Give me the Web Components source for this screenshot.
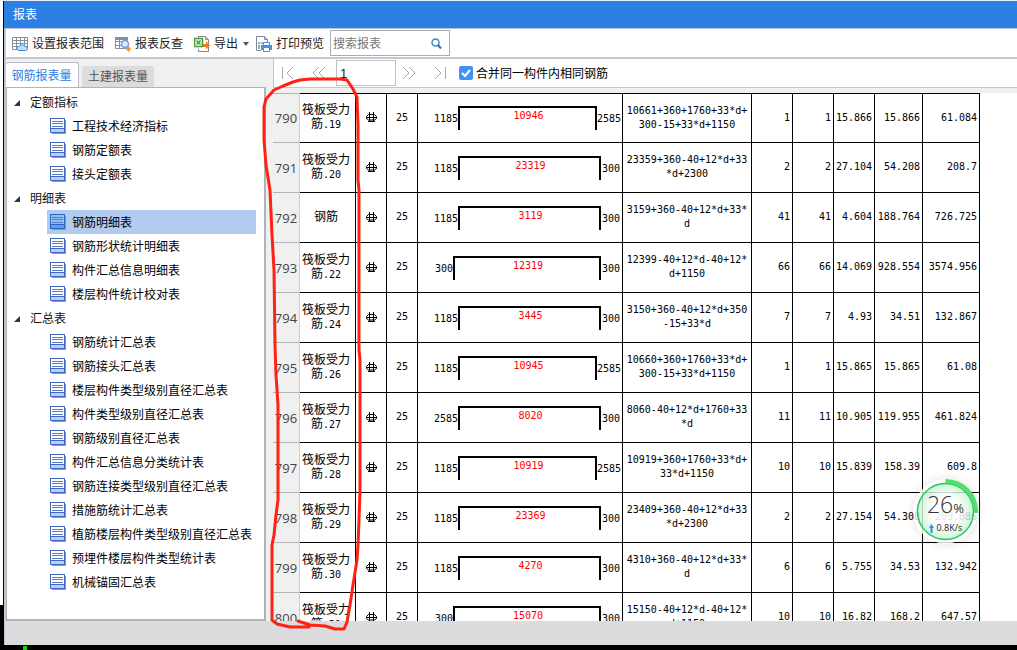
<!DOCTYPE html>
<html lang="zh-CN">
<head>
<meta charset="utf-8">
<title>报表</title>
<style>
  html, body { height: 100%; }
  body { margin: 0; overflow: hidden; background: #000; font: 12px/16px "Liberation Sans", "Noto Sans CJK SC", sans-serif; color: #111; }
</style>
</head>
<body>
<report-window heading="报表">
  <report-toolbar slot="toolbar"></report-toolbar>
  <report-sidebar slot="side"></report-sidebar>
  <report-pager slot="pager"></report-pager>
  <rebar-table slot="table"></rebar-table>
  <red-markup slot="overlay"></red-markup>
  <speed-ball slot="overlay" percent="26" rate="0.8K/s"></speed-ball>
</report-window>

<script>
const define = (name, html) => customElements.define(name, class extends HTMLElement {
  connectedCallback() {
    if (this.shadowRoot) return;
    const t = document.createElement('template');
    t.innerHTML = '<style>*{box-sizing:border-box}button,input{font:inherit;color:inherit;margin:0}button{border:0;background:none;padding:0}svg{display:block;flex:none}</style>' + (typeof html === 'function' ? html(this) : html);
    this.attachShadow({ mode: 'open' }).append(t.content.cloneNode(true));
  }
});

define('report-window', el => `
<style>
  :host { display: flex; flex-direction: column; position: relative; height: 100vh; box-sizing: border-box; padding: 1px 0 5px 4px;
    background: linear-gradient(#e8edf3, #e8edf3) 0 0 / 100% 1px no-repeat,
      linear-gradient(#00e000, #00e000) 23px 100% / 4px 4px no-repeat,
      linear-gradient(#fff, #fff) 0 0 / 3px 605px no-repeat, #000; }
  header { flex: none; height: 28px; padding: 0 9px; background: #2d80e3; border-bottom: 1px solid #b9c3cf; color: #fff; line-height: 28px; }
  h1 { margin: 0; font: inherit; }
  main { flex: 1; min-height: 0; display: flex; gap: 7px; background: #f0f0f0; border-left: 2px solid #c3c6cd; }
  section { flex: 1; min-width: 0; display: flex; flex-direction: column; }
  .sheet { flex: 1; min-height: 0; margin-top: 5px; overflow: hidden; background: #fff; }
  footer { flex: none; height: 24px; background: #dcdcdf; border-left: 1px solid #c3c6cd; }
</style>
<header><h1>${el.getAttribute('heading')}</h1></header>
<slot name="toolbar"></slot>
<main>
  <slot name="side"></slot>
  <section><slot name="pager"></slot><div class="sheet"><slot name="table"></slot></div></section>
</main>
<footer></footer>
<slot name="overlay"></slot>`);

const grid = `<path d="M.5 1.5h15v12h-15zM.5 4.500h15M.5 7.500h15M.5 10.500h15M4.500 1.500v12M8.500 1.500v12M12.500 1.500v12" fill="#fff" stroke="#84929f"/>`;
define('report-toolbar', `
<style>
  :host { display: flex; align-items: center; height: 30px; flex: none; box-sizing: border-box; background: #fff; border-bottom: 2px solid #c5c7cc; border-left: 2px solid #c3c6cd; padding-left: 6px; gap: 11px; color: #222; }
  button { display: flex; align-items: center; gap: 4px; height: 24px; padding-top: 2px; }
  .caret { border: 3px solid transparent; border-top: 4px solid #555; border-bottom: 0; margin-left: 1px; }
  .tight { margin-left: -4px; }
  label { display: flex; align-items: center; height: 26px; width: 120px; border: 1px solid #a9adb5; padding: 0 7px 0 2px; margin-left: -5px; background: #fff; }
  input { border: 0; outline: 0; width: 0; flex: 1; padding: 2px 0 0; background: none; }
  input::placeholder { color: #777; opacity: 1; }
</style>
<button><svg width="16" height="16">${grid}<path d="M6.500 14.500c-3-1-2-4.500.5-4 1-2 5.500-2 6 0 3.500 0 3.500 3.500.5 4z" fill="#bfe0fa" stroke="#3f87cc"/></svg>设置报表范围</button>
<button><svg width="16" height="16"><path d="M.5 1.500h12v11H.5zM.5 5.500h12M.5 9.500h8M4.500 1.500v11" fill="#fff" stroke="#84929f"/><path d="M0 1h13v3H0z" fill="#84929f"/><circle cx="10" cy="8" r="3.500" fill="#d6ebfb" stroke="#6f9fe8" stroke-width="1.500"/><path d="M13.500 10l2.500 3-2.500 3-2.500-3z" fill="#f79a1c"/></svg>报表反查</button>
<button><svg width="16" height="16"><path d="M4.500 2V.5h7l3 3v12h-10V13M11.500.5v3h3" fill="#fff" stroke="#7c8b99"/><path d="M.5 2.500h8v8h-8z" fill="#eef7ea" stroke="#4d9a3c" stroke-width="1.500"/><path d="M2.500 4.500l4 4M6.500 4.500l-4 4" stroke="#4d9a3c" stroke-width="1.500"/><path d="M9 8h3V5l4 4.500-4 4V11H9z" fill="#f47b20"/></svg>导出<span class="caret"></span></button>
<button class="tight"><svg width="16" height="16"><path d="M5 14.500H.5V.5h8l3 3V6M8.500.5v3h3" fill="#fff" stroke="#7c8b99"/><path d="M2 7h2M2 10h2M5 7h2M2 12h2" stroke="#7c8b99" stroke-width="1.500"/><path d="M7.500 6.500h6v3h-6z" fill="#fff" stroke="#4a90e2"/><path d="M5 9h11v5H5z" fill="#4a90e2"/><path d="M7.500 11.500h6v4h-6z" fill="#fff" stroke="#4a90e2"/></svg>打印预览</button>
<label><input type="search" placeholder="搜索报表" aria-label="搜索报表"><svg width="11" height="11"><circle cx="4.500" cy="4.500" r="3.500" fill="none" stroke="#2f8fd0" stroke-width="1.500"/><path d="M7 7l3 3.500" stroke="#2f6fb5" stroke-width="2"/></svg></label>`);

const groups = [
  ['定额指标', '工程技术经济指标 钢筋定额表 接头定额表'],
  ['明细表', '钢筋明细表 钢筋形状统计明细表 构件汇总信息明细表 楼层构件统计校对表'],
  ['汇总表', '钢筋统计汇总表 钢筋接头汇总表 楼层构件类型级别直径汇总表 构件类型级别直径汇总表 钢筋级别直径汇总表 构件汇总信息分类统计表 钢筋连接类型级别直径汇总表 措施筋统计汇总表 植筋楼层构件类型级别直径汇总表 预埋件楼层构件类型统计表 机械锚固汇总表']
];
define('report-sidebar', `
<style>
  :host { display: flex; flex-direction: column; width: 260px; flex: none; padding-top: 3px; box-sizing: border-box; }
  nav { display: flex; align-items: flex-end; gap: 3px; height: 25px; flex: none; }
  nav button { width: 72px; height: 21px; padding: 0; background: #dcdcdc; color: #555; border-radius: 3px 3px 0 0; }
  nav button.on { width: 73px; height: 25px; padding: 2px 1px 0 0; background: #fff; color: #2d80e3; border: 1px solid #b9bcc3; border-width: 1px 1px 0 0; }
  .tree { flex: 1; min-height: 0; overflow: hidden; background: #fff; border: 1px solid #b0b3ba; border-width: 1px 2px 2px 1px; padding-top: 2px; }
</style>
<nav><button class="on">钢筋报表量</button><button>土建报表量</button></nav>
<div class="tree">${groups.map(([g, items]) => `<tree-group label="${g}">${items.split(' ').map(i => `<tree-item${i === '钢筋明细表' ? ' selected' : ''}>${i}</tree-item>`).join('')}</tree-group>`).join('')}</div>`);

define('tree-group', el => `
<style>
  :host { display: block; }
  button { display: flex; align-items: center; gap: 10px; height: 24px; padding: 2px 0 0 7px; color: #111; }
</style>
<button aria-expanded="true"><svg width="6" height="6"><path d="M6 0v6H0z" fill="#333"/></svg>${el.getAttribute('label')}</button><slot></slot>`);

define('tree-item', `
<style>
  :host { display: block; margin: 0 8px 0 40px; }
  :host([selected]) { background: #b1ccee; }
  button { display: flex; align-items: center; gap: 6px; height: 24px; width: 100%; padding: 0 0 0 3px; text-align: left; white-space: nowrap; color: #000; }
  span { padding-top: 2px; }
  rect { fill: #fff; stroke: #4169c1; }
  .foot { fill: #b9cdfb; }
  :host([selected]) rect { fill: #8dc0f4; stroke: #2b66c4; }
  :host([selected]) .foot { fill: #5f9fe8; }
</style>
<button><svg width="16" height="16"><path d="M2 15.500h13.500V2" fill="none" stroke="#8f96a8"/><rect x=".5" y=".5" width="14" height="14"/><rect class="foot" x=".5" y="10.500" width="14" height="4"/><path d="M2 3.500h11M2 5.500h11M2 8.500h11" stroke="#5b7dc8"/></svg><span><slot></slot></span></button>`);

define('report-pager', `
<style>
  :host { display: flex; align-items: center; flex: none; height: 29px; box-sizing: border-box; background: #fff; border-bottom: 1px solid #c5c7cc; border-left: 1px solid #c5c7cc; color: #000; }
  button { width: 28px; height: 24px; display: grid; place-items: center; }
  .group { display: flex; align-items: center; gap: 3px; }
  svg { fill: none; stroke: #aaa; }
  .page { width: 60px; height: 26px; border: 1px solid #bfc2c8; border-radius: 0; padding: 1px 3px 0; margin: 0 -4px 0 0; font-size: 13px; color: #222; background: #fff; outline: 0; }
  label { display: flex; align-items: center; gap: 3px; margin-left: 5px; }
  label span { padding-top: 1px; }
  .check { appearance: none; width: 14px; height: 14px; border-radius: 2px; background: #3f93f5 url("data:image/svg+xml,%3Csvg xmlns='http://www.w3.org/2000/svg' viewBox='0 0 14 14'%3E%3Cpath d='M3 7l3 3 5-6' fill='none' stroke='white' stroke-width='2'/%3E%3C/svg%3E"); }
</style>
<div class="group">
<button aria-label="首页"><svg width="14" height="14"><path d="M1.500 1v12M12 1L6 7l6 6"/></svg></button>
<button aria-label="上一页"><svg width="14" height="14"><path d="M7 1L1 7l6 6M13 1L7 7l6 6"/></svg></button>
<input class="page" value="1" aria-label="页码">
<button aria-label="下一页"><svg width="14" height="14"><path d="M1 1l6 6-6 6M7 1l6 6-6 6"/></svg></button>
<button aria-label="末页"><svg width="14" height="14"><path d="M2 1l6 6-6 6M12.500 1v12"/></svg></button>
</div>
<label><input class="check" type="checkbox" checked><span>合并同一构件内相同钢筋</span></label>`);

const rows = [
  [790, '筋.19', 1185, 10946, 2585, '10661+360+1760+33*d+|300-15+33*d+1150', 1, '15.866', '15.866', '61.084'],
  [791, '筋.20', 1185, 23319, 300, '23359+360-40+12*d+33|*d+2300', 2, '27.104', '54.208', '208.7'],
  [792, '', 1185, 3119, 300, '3159+360-40+12*d+33*|d', 41, '4.604', '188.764', '726.725'],
  [793, '筋.22', 300, 12319, 300, '12399-40+12*d-40+12*|d+1150', 66, '14.069', '928.554', '3574.956'],
  [794, '筋.24', 1185, 3445, 300, '3150+360-40+12*d+350|-15+33*d', 7, '4.93', '34.51', '132.867'],
  [795, '筋.26', 1185, 10945, 2585, '10660+360+1760+33*d+|300-15+33*d+1150', 1, '15.865', '15.865', '61.08'],
  [796, '筋.27', 2585, 8020, 300, '8060-40+12*d+1760+33|*d', 11, '10.905', '119.955', '461.824'],
  [797, '筋.28', 1185, 10919, 2585, '10919+360+1760+33*d+|33*d+1150', 10, '15.839', '158.39', '609.8'],
  [798, '筋.29', 1185, 23369, 300, '23409+360-40+12*d+33|*d+2300', 2, '27.154', '54.308', '209.086'],
  [799, '筋.30', 1185, 4270, 300, '4310+360-40+12*d+33*|d', 6, '5.755', '34.53', '132.942'],
  [800, '筋.31', 300, 15070, 300, '15150-40+12*d-40+12*|d+1150', 10, '16.82', '168.2', '647.57']
];
define('rebar-table', `
<style>
  :host { display: block; color: #000; }
  table { table-layout: fixed; width: 707px; border-collapse: separate; border-spacing: 0; background: #fff; }
  td, th { height: 50px; padding: 0; border: solid #000; border-width: 0 1px 1px 0; font: 10px/14px "DejaVu Sans Mono", "Noto Sans CJK SC", monospace; text-align: center; overflow: hidden; white-space: nowrap; }
  th { background: #f0f0f0; border-color: #b5b5b5; border-right-color: #d0d0d0; color: #444; font: 13px/16px "Open Sans", sans-serif; }
  tr:first-child td { border-top-width: 1px; }
  tr:first-child th { border-top: 1px solid #b5b5b5; }
  td { padding-bottom: 1px; }
  td.name { font: 12px/14px "Liberation Sans", "Noto Sans CJK SC", sans-serif; padding: 0 3px 2px 0; }
  .name span { font: 10px/12px "DejaVu Sans Mono", monospace; }
  td.n { text-align: right; padding-right: 2px; }
  td.shape { padding: 0; }
  svg { margin: 0 auto; fill: none; stroke: #000; }
</style>
<table><colgroup>${[27, 56, 31, 31, 205, 129, 41, 41, 41, 48, 57].map(w => `<col style="width:${w}px">`).join('')}</colgroup><tbody>
${rows.map(([no, name, l, len, r, f, n, a, b, c]) => `<tr><th scope="row">${no}</th>
<td class="name">${name ? `筏板受力<br>筋<span>${name.slice(1)}</span>` : '钢筋'}</td>
<td><svg width="11" height="11" aria-label="HRB400"><path d="M2.500 2.500h6l2 2v2l-2 1.500h-6L.5 6.500v-2zM3.500 0v9.500M7.500 0v9.500M0 5.500h11M2 9.500h7"/></svg></td>
<td>25</td><td class="shape"><rebar-shape left="${l}" length="${len}" right="${r}"></rebar-shape></td>
<td>${f.replace('|', '<br>')}</td>${[n, n, a, b, c].map(v => `<td class="n">${v}</td>`).join('')}</tr>`).join('')}
</tbody></table>`);

define('rebar-shape', el => `
<style>
  :host { display: flex; height: 24px; }
  span { flex: none; line-height: 22px; padding-top: 2px; }
  .l { width: 40px; text-align: right; }
  .r { width: 21px; text-align: left; padding-left: 1px; }
  .bar { flex: 1; border: 2px solid #000; border-bottom: 0; color: #f00; line-height: 16px; padding-left: 2px; }
  :host([left="300"]) .l { width: 35px; }
  :host([right="2585"]) .r { width: 25px; padding-left: 0; }
</style>
<span class="l">${el.getAttribute('left')}</span><div class="bar">${el.getAttribute('length')}</div><span class="r">${el.getAttribute('right')}</span>`);

define('red-markup', `
<style>
  :host { position: absolute; left: 255px; top: 70px; pointer-events: none; }
  path { fill: none; stroke: #ff2213; stroke-width: 3; stroke-linejoin: round; stroke-linecap: round; }
</style>
<svg width="120" height="570" viewBox="255 70 120 570"><path d="M298 621L310 625 325 626 335 629 344 629 347 622 350 605 353 585 357 560 358 545 359 520 360 490 360 360 359 350 359 190 358 180 358 125 357 97 353 89 347 80 340 79 310 79 300 80 293 82 283 86 274 90 266 99 264 107 264 140 266 165 270 190 272 235 274 270 275 345 276 375 278 405 278 500 276 515 274 535 272 545 272 620 277 624 290 627 309 627"/></svg>`);

define('speed-ball', el => `
<style>
  :host { position: absolute; right: 39px; top: 479px; width: 65px; height: 65px; border-radius: 50%; box-shadow: 0 0 8px #0002; color: #333; }
  svg { position: absolute; inset: 0; }
  .big, .rate { position: relative; display: flex; justify-content: center; align-items: baseline; }
  .big { padding-top: 13px; font: 300 23px/25px "Open Sans", sans-serif; }
  small { font-size: 13px; font-weight: 400; }
  .rate { font: 9px/14px "Open Sans", sans-serif; color: #222; gap: 3px; align-items: center; }
  .rate svg { position: static; }
</style>
<svg width="65" height="65"><defs><radialGradient id="g"><stop offset=".5" stop-color="#fff" stop-opacity=".88"/><stop offset="1" stop-color="#c4f2ce" stop-opacity=".8"/></radialGradient></defs>
<circle cx="32.500" cy="32.500" r="30" fill="none" stroke="#fff" stroke-opacity=".8" stroke-width="4"/><circle cx="32.500" cy="32.500" r="28" fill="url(#g)" stroke="#25c965" stroke-width="1.500"/><path d="M32.500 2A30.500 30.500 0 0 1 63 34" fill="none" stroke="#4fe06c" stroke-width="4"/></svg>
<div class="big">${el.getAttribute('percent')}<small>%</small></div><div class="rate"><svg width="5" height="9"><path d="M2.500 0L5 4H3.500v5h-2V4H0z" fill="#2d90f0"/></svg>${el.getAttribute('rate')}</div>`);
</script>
</body>
</html>
